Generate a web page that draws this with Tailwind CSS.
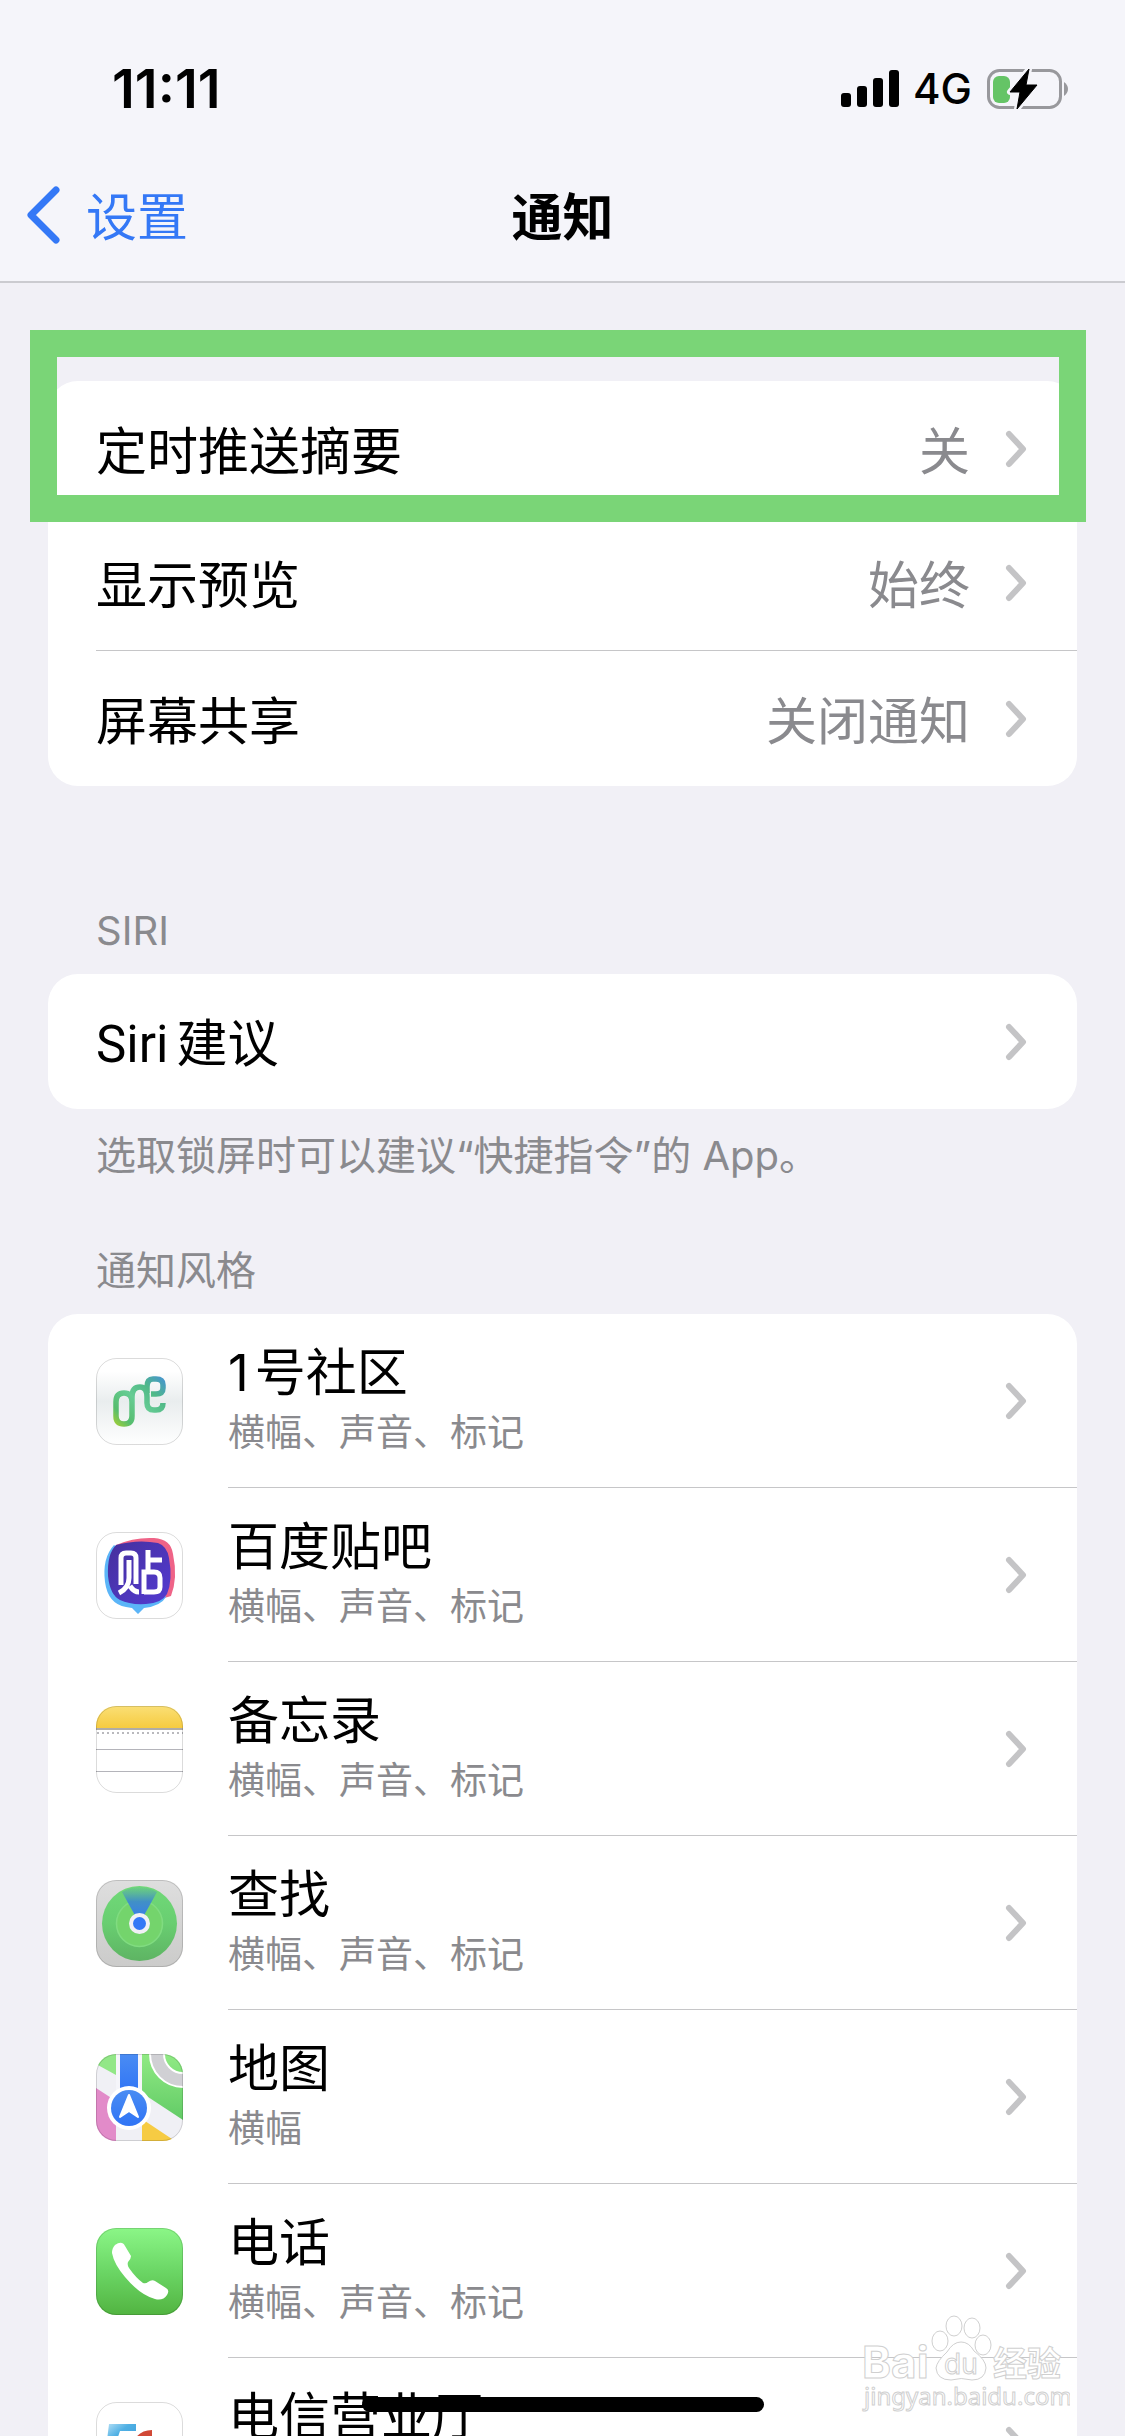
<!DOCTYPE html>
<html lang="zh-CN">
<head>
  <meta charset="UTF-8" />
  <meta name="viewport" content="width=device-width, initial-scale=1.0" />
  <title>通知</title>
  <script src="https://cdn.jsdelivr.net/npm/@tailwindcss/browser@4"></script>
</head>

<body class="relative flex h-screen flex-col overflow-hidden bg-[#f1f0f6] font-[Inter,'Noto_Sans_CJK_SC',sans-serif] text-[51px] leading-[60px] text-black">

  <!-- shared shapes -->
  <svg class="absolute h-0 w-0">
    <symbol id="chevron" viewBox="0 0 22 38">
      <path d="M4 4 L18 19 L4 34" fill="none" stroke="#c4c4c6" stroke-width="6" stroke-linecap="round" stroke-linejoin="round" />
    </symbol>
    <symbol id="frame" viewBox="0 0 87 87">
      <rect x="0.5" y="0.5" width="86" height="86" rx="20" fill="none" stroke="#000" stroke-opacity="0.14" />
    </symbol>
    <clipPath id="tile"><rect width="87" height="87" rx="20" /></clipPath>
  </svg>

  <header class="border-b-2 border-[#cbcbd0] bg-[#f5f5fa]">
    <div class="flex h-[148px] items-center justify-between pt-[30px] pr-14 pl-28">
      <time class="text-[54px] font-semibold">11:11</time>
      <div class="flex items-center gap-[13px]">
        <svg class="h-[38px] w-[60px]" viewBox="0 0 60 38">
          <rect x="1" y="23" width="10" height="14" rx="3" />
          <rect x="17" y="16" width="10" height="21" rx="3" />
          <rect x="33" y="8" width="10" height="29" rx="3" />
          <rect x="49" y="0" width="10" height="37" rx="3" />
        </svg>
        <span class="text-[42px] font-medium">4G</span>
        <svg class="h-[42px] w-[84px]" viewBox="0 0 84 42">
          <rect x="3.5" y="2.5" width="72" height="37" rx="11" fill="none" stroke="#98989c" stroke-width="3" />
          <path d="M79 14 Q83 17 83 21 Q83 25 79 28 Z" fill="#98989c" />
          <rect x="8" y="8" width="17" height="27" rx="6" fill="#65c466" />
          <path d="M44 1 L25 24 H35 L32 41 L52 17 H41 Z" fill="#000" stroke="#f5f5fa" stroke-width="6" stroke-linejoin="round" />
          <path d="M44 1 L25 24 H35 L32 41 L52 17 H41 Z" fill="#000" stroke="#000" stroke-linejoin="round" />
        </svg>
      </div>
    </div>
    <nav class="grid h-[133px] grid-cols-3 items-center">
      <a href="#" class="flex items-center gap-[26px] pl-[26px] text-[#3478f6]">
        <svg class="h-[58px] w-[34px]" viewBox="0 0 34 58">
          <path d="M30 4 L5 29 L30 54" fill="none" stroke="#3478f6" stroke-width="7" stroke-linecap="round" stroke-linejoin="round" />
        </svg>
        <span class="pt-1.5">设置</span>
      </a>
      <h1 class="pt-1.5 text-center font-bold">通知</h1>
    </nav>
  </header>

  <main class="min-h-0 flex-1 overflow-hidden px-12 pt-[98px]">
    <ul class="rounded-[30px] bg-white">
      <li class="relative pl-12">
        <a href="#" class="flex h-[135px] items-center pr-[50px]">
          <span class="flex-1 pt-1.5">定时推送摘要</span>
          <span class="pt-1.5 text-[#8a8a8e]">关</span>
          <svg class="ml-[35px] h-[38px] w-[22px]"><use href="#chevron" /></svg>
        </a>
        <!-- highlight box -->
        <div class="absolute -top-[51px] -right-[9px] -bottom-[6px] -left-[18px] border-[27px] border-[#7ad577]"></div>
      </li>
      <li class="pl-12">
        <a href="#" class="flex h-[135px] items-center border-b border-[#c6c6c8] pr-[50px]">
          <span class="flex-1 pt-1.5">显示预览</span>
          <span class="pt-1.5 text-[#8a8a8e]">始终</span>
          <svg class="ml-[35px] h-[38px] w-[22px]"><use href="#chevron" /></svg>
        </a>
      </li>
      <li class="pl-12">
        <a href="#" class="flex h-[135px] items-center pr-[50px]">
          <span class="flex-1 pt-1.5">屏幕共享</span>
          <span class="pt-1.5 text-[#8a8a8e]">关闭通知</span>
          <svg class="ml-[35px] h-[38px] w-[22px]"><use href="#chevron" /></svg>
        </a>
      </li>
    </ul>

    <h2 class="mt-[121px] px-12 text-[40px] leading-12 text-[#8a8a8e]">SIRI</h2>
    <ul class="mt-[19px] rounded-[30px] bg-white">
      <li class="pl-12">
        <a href="#" class="flex h-[135px] items-center pr-[50px]">
          <span class="flex-1 pt-1.5"><span class="mr-2 font-[Roboto]">Siri</span>建议</span>
          <svg class="h-[38px] w-[22px]"><use href="#chevron" /></svg>
        </a>
      </li>
    </ul>
    <p class="mt-[23px] px-12 text-[40px] leading-12 text-[#8a8a8e]">选取锁屏时可以建议“快捷指令”的 App。</p>

    <h2 class="mt-[67px] px-12 text-[40px] leading-12 text-[#8a8a8e]">通知风格</h2>
    <ul class="mt-[19px] rounded-t-[30px] bg-white">
      <li>
        <a href="#" class="flex h-[174px] items-center gap-[45px] pl-12">
          <svg class="h-[87px] w-[87px]" viewBox="0 0 87 87">
            <defs>
              <linearGradient id="silver" x2="0" y2="1"><stop offset="0.15" stop-color="#fff" /><stop offset="0.5" stop-color="#e9edee" /><stop offset="1" stop-color="#fff" /></linearGradient>
              <linearGradient id="one" gradientUnits="userSpaceOnUse" x1="18" y1="68" x2="66" y2="20"><stop offset="0" stop-color="#a8d030" /><stop offset="0.2" stop-color="#56bd6e" /><stop offset="0.5" stop-color="#66cc94" /><stop offset="0.75" stop-color="#50b987" /><stop offset="1" stop-color="#4798c9" /></linearGradient>
            </defs>
            <rect width="87" height="87" rx="20" fill="url(#silver)" />
            <g fill="none" stroke="url(#one)" stroke-width="5.500">
              <path d="M36 55 V44 Q36 35 28 35 Q20 35 20 44 V58 Q20 66 28 66 Q36 66 36 58 V39 Q36 29 44 29 Q51 29 51 39 V45 Q51 52 58 52 H60 Q67 52 67 45" />
              <path d="M51 35 V29 Q51 21 57 21 H60 Q67 21 67 27 V30 Q67 36 60 36 H55" />
            </g>
            <use href="#frame" />
          </svg>
          <div class="flex h-full flex-1 items-center border-b border-[#c6c6c8] pr-[50px]">
            <div class="flex-1 pt-1">
              <div><span class="mr-1.5">1</span>号社区</div>
              <div class="text-[37px] text-[#8a8a8e]">横幅、声音、标记</div>
            </div>
            <svg class="h-[38px] w-[22px]"><use href="#chevron" /></svg>
          </div>
        </a>
      </li>
      <li>
        <a href="#" class="flex h-[174px] items-center gap-[45px] pl-12">
          <svg class="h-[87px] w-[87px]" viewBox="0 0 87 87">
            <defs>
              <linearGradient id="violet" x2="1" y2="1"><stop offset="0" stop-color="#45309c" /><stop offset="1" stop-color="#533bd2" /></linearGradient>
            </defs>
            <rect width="87" height="87" rx="20" fill="#fff" />
            <path d="M20 13 Q38 5 58 6 Q75 7 77 22 Q82 46 75 64 L62 68 Z" fill="#ef6387" />
            <path d="M18 13 Q6 26 9 50 Q12 72 30 75 L36 76 L42 82 L48 76 Q65 74 70 65 L40 30 Z" fill="#5bb5f8" />
            <path d="M20 13 Q42 7 62 11 Q71 14 73 26 Q77 48 71 62 Q66 71 50 72 Q34 73 24 68 Q14 63 12 44 Q11 22 20 13 Z" fill="url(#violet)" />
            <g fill="none" stroke="#fff" stroke-width="5">
              <path d="M25 53 V26 Q25 21 30 21 H35 Q40 21 40 26 V52" />
              <path d="M33 28 V46 Q33 56 23 61 M34 54 Q38 60 43 60" />
              <path d="M52 18 V40 M52 28 H66 M48 62 V40 H58 Q64 40 64 46 V55 Q64 60 58 60 H48" />
            </g>
            <use href="#frame" />
          </svg>
          <div class="flex h-full flex-1 items-center border-b border-[#c6c6c8] pr-[50px]">
            <div class="flex-1 pt-1">
              <div>百度贴吧</div>
              <div class="text-[37px] text-[#8a8a8e]">横幅、声音、标记</div>
            </div>
            <svg class="h-[38px] w-[22px]"><use href="#chevron" /></svg>
          </div>
        </a>
      </li>
      <li>
        <a href="#" class="flex h-[174px] items-center gap-[45px] pl-12">
          <svg class="h-[87px] w-[87px]" viewBox="0 0 87 87">
            <defs>
              <linearGradient id="amber" x2="0" y2="1"><stop offset="0" stop-color="#fadf75" /><stop offset="1" stop-color="#f6cb40" /></linearGradient>
            </defs>
            <g clip-path="url(#tile)">
              <rect width="87" height="87" fill="#fff" />
              <rect width="87" height="22" fill="url(#amber)" />
              <path d="M0 23 H87" stroke="#b0aca6" stroke-width="2" />
              <path d="M1 27 H87" stroke="#b9b9bd" stroke-width="2" stroke-dasharray="2 3" />
              <path d="M0 43.5 H87 M0 65.5 H87" stroke="#b4b4ba" />
            </g>
            <use href="#frame" />
          </svg>
          <div class="flex h-full flex-1 items-center border-b border-[#c6c6c8] pr-[50px]">
            <div class="flex-1 pt-1">
              <div>备忘录</div>
              <div class="text-[37px] text-[#8a8a8e]">横幅、声音、标记</div>
            </div>
            <svg class="h-[38px] w-[22px]"><use href="#chevron" /></svg>
          </div>
        </a>
      </li>
      <li>
        <a href="#" class="flex h-[174px] items-center gap-[45px] pl-12">
          <svg class="h-[87px] w-[87px]" viewBox="0 0 87 87">
            <defs>
              <linearGradient id="gray" x2="0" y2="1"><stop offset="0" stop-color="#dedede" /><stop offset="1" stop-color="#cbcbca" /></linearGradient>
              <linearGradient id="radar" x2="0" y2="1"><stop offset="0" stop-color="#70d978" /><stop offset="0.5" stop-color="#69ce71" /><stop offset="1" stop-color="#5eb463" /></linearGradient>
              <linearGradient id="beam" x2="0" y2="1"><stop offset="0" stop-color="#4a98b8" stop-opacity="0.1" /><stop offset="0.4" stop-color="#4190c6" /><stop offset="1" stop-color="#3478f6" /></linearGradient>
            </defs>
            <rect width="87" height="87" rx="20" fill="url(#gray)" />
            <circle cx="43.500" cy="43.500" r="37.500" fill="url(#radar)" />
            <circle cx="43.500" cy="43.500" r="23" fill="#74d46c" stroke="#80dc80" stroke-width="1.500" />
            <path d="M43.500 43.500 L26 12 Q43 2 61 12 Z" fill="url(#beam)" />
            <circle cx="43.500" cy="43.500" r="10.500" fill="#f1f0f6" />
            <circle cx="43.500" cy="43.500" r="6.500" fill="#3478f6" />
            <use href="#frame" />
          </svg>
          <div class="flex h-full flex-1 items-center border-b border-[#c6c6c8] pr-[50px]">
            <div class="flex-1 pt-1">
              <div>查找</div>
              <div class="text-[37px] text-[#8a8a8e]">横幅、声音、标记</div>
            </div>
            <svg class="h-[38px] w-[22px]"><use href="#chevron" /></svg>
          </div>
        </a>
      </li>
      <li>
        <a href="#" class="flex h-[174px] items-center gap-[45px] pl-12">
          <svg class="h-[87px] w-[87px]" viewBox="0 0 87 87">
            <defs>
              <linearGradient id="land" x2="0" y2="1"><stop offset="0" stop-color="#90ea84" /><stop offset="1" stop-color="#62cb66" /></linearGradient>
              <linearGradient id="road" x2="0" y2="1"><stop offset="0" stop-color="#4a8cf3" /><stop offset="1" stop-color="#3074f5" /></linearGradient>
            </defs>
            <g clip-path="url(#tile)">
              <rect width="87" height="87" fill="#f0f0f5" />
              <path d="M0 0 H20 V21 L0 10 Z" fill="#92e787" />
              <path d="M46 0 H87 V66 L46 39 Z" fill="url(#land)" />
              <path d="M0 34 L20 47 V87 H0 Z" fill="#e28bc9" />
              <path d="M46 65 L79 87 H46 Z" fill="#f6cb43" />
              <circle cx="87" cy="0" r="26" fill="none" stroke="#fff" stroke-width="16" />
              <circle cx="87" cy="0" r="26" fill="none" stroke="#d0d0d4" stroke-width="12" />
              <rect x="20" width="26" height="40" fill="#f5f5fa" />
              <rect x="24" width="18" height="40" fill="url(#road)" />
              <circle cx="33" cy="54" r="22" fill="#fff" />
              <circle cx="33" cy="54" r="18" fill="url(#road)" />
              <path d="M33 41 L42 63 L33 57 L24 63 Z" fill="#fff" stroke="#fff" stroke-width="2" stroke-linejoin="round" />
            </g>
            <use href="#frame" />
          </svg>
          <div class="flex h-full flex-1 items-center border-b border-[#c6c6c8] pr-[50px]">
            <div class="flex-1 pt-1">
              <div>地图</div>
              <div class="text-[37px] text-[#8a8a8e]">横幅</div>
            </div>
            <svg class="h-[38px] w-[22px]"><use href="#chevron" /></svg>
          </div>
        </a>
      </li>
      <li>
        <a href="#" class="flex h-[174px] items-center gap-[45px] pl-12">
          <svg class="h-[87px] w-[87px]" viewBox="0 0 87 87">
            <defs>
              <linearGradient id="call" x2="0" y2="1"><stop offset="0" stop-color="#8bf687" /><stop offset="0.5" stop-color="#6bd665" /><stop offset="1" stop-color="#52b441" /></linearGradient>
            </defs>
            <rect width="87" height="87" rx="20" fill="url(#call)" />
            <path d="M19 17 Q26 12 29 18 L35 28 Q35 31 32 34 Q31 37 33 40 Q40 50 47 55 Q50 56 52 54 Q56 51 59 53 L70 60 Q74 62 71 67 Q67 73 59 71 Q44 67 29 49 Q18 36 16 25 Q16 20 19 17 Z" fill="#fff" />
            <use href="#frame" />
          </svg>
          <div class="flex h-full flex-1 items-center border-b border-[#c6c6c8] pr-[50px]">
            <div class="flex-1 pt-1">
              <div>电话</div>
              <div class="text-[37px] text-[#8a8a8e]">横幅、声音、标记</div>
            </div>
            <svg class="h-[38px] w-[22px]"><use href="#chevron" /></svg>
          </div>
        </a>
      </li>
      <li>
        <a href="#" class="flex h-[174px] items-center gap-[45px] pl-12">
          <svg class="h-[87px] w-[87px]" viewBox="0 0 87 87">
            <defs>
              <linearGradient id="sky" x2="1" y2="1"><stop offset="0" stop-color="#b5e0f6" /><stop offset="0.4" stop-color="#4fb0e4" /><stop offset="1" stop-color="#3d9ad8" /></linearGradient>
            </defs>
            <rect width="87" height="87" rx="20" fill="#fff" />
            <path d="M13 22 H40 V29 H24 L22 35 Q34 33 34 46 H10 Z" fill="url(#sky)" />
            <path d="M56 28 V35 Q47 36 45 46 H34 Q38 28 56 28 Z" transform="translate(0 -7) scale(1 1.250)" fill="#d14836" />
            <text x="56" y="45" class="font-[Inter] text-[12px]" fill="#6db9e0">hello</text>
            <use href="#frame" />
          </svg>
          <div class="flex h-full flex-1 items-center border-b border-[#c6c6c8] pr-[50px]">
            <div class="flex-1 pt-1">
              <div>电信营业厅</div>
              <div class="text-[37px] text-[#8a8a8e]">横幅、声音、标记</div>
            </div>
            <svg class="h-[38px] w-[22px]"><use href="#chevron" /></svg>
          </div>
        </a>
      </li>
    </ul>
  </main>

  <!-- watermark -->
  <svg class="absolute right-[55px] bottom-[20px] h-[106px] w-[210px]" viewBox="0 0 210 106" fill="#fff" stroke="#d0d0d0" stroke-width="1">
    <text x="2" y="68" class="font-[Inter] text-[44px] font-bold">Bai</text>
    <ellipse cx="80" cy="31" rx="8" ry="10" />
    <ellipse cx="94" cy="16" rx="8" ry="10" />
    <ellipse cx="112" cy="18" rx="8" ry="10" />
    <ellipse cx="123" cy="35" rx="8" ry="10" />
    <path d="M101 32 Q109 32 114 41 Q126 50 126 58 Q125 70 112 70 Q101 67 91 70 Q77 70 76 58 Q77 51 87 42 Q93 32 101 32 Z" />
    <text x="84" y="64" class="font-[Inter] text-[28px]">du</text>
    <text x="133" y="66" class="font-['Noto_Sans_CJK_SC'] text-[34px] font-bold">经验</text>
    <text x="4" y="95" class="font-['Noto_Sans'] text-[24px]">jingyan.baidu.com</text>
  </svg>

  <!-- home indicator -->
  <div class="absolute bottom-6 left-1/2 h-[15px] w-[402px] -translate-x-1/2 rounded-full bg-black"></div>
</body>
</html>
